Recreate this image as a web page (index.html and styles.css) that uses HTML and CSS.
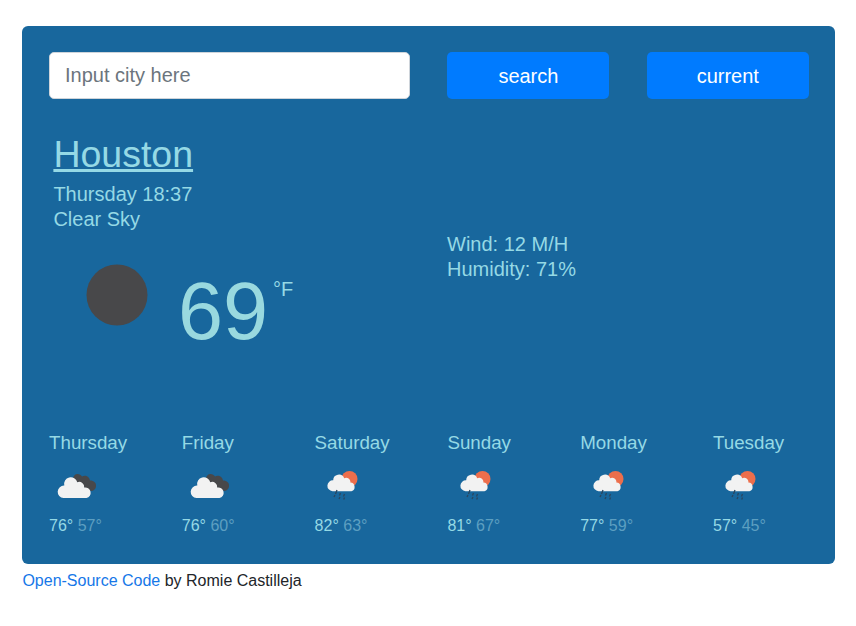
FILE: index.html
```html
<!DOCTYPE html>
<html lang="en">
<head>
<meta charset="utf-8">
<title>Weather</title>
<link rel="stylesheet" href="styles.css">
</head>
<body>
<svg width="0" height="0" class="defs" aria-hidden="true">
  <symbol id="clouds" viewBox="0 0 50 40">
    <path fill="#48484a" d="M21 14C21 11 23 9 25.500 9C27.500 9 29 10 30 11.500C33.500 9.500 37.500 12 38 15.500C42 15.500 44.500 18 44 21.500C43.700 24 42 25.500 39.500 26L34 24Z"/>
    <path fill="#f2f2f2" d="M11.500 33A6 6 0 0 1 12.300 20.600A6.700 6.700 0 0 1 25.300 17.300A5 5 0 0 1 32.200 22.600A5.200 5.200 0 0 1 34.500 33Z"/>
  </symbol>
  <symbol id="rain" viewBox="0 0 45 40">
    <circle cx="29.500" cy="14" r="8" fill="#ec6e4c"/>
    <path fill="#f2f2f2" d="M12.500 26.200A5.100 5.100 0 0 1 13.200 15.300A5.700 5.700 0 0 1 24.200 13.200A4.400 4.400 0 0 1 30.400 17.600A4.400 4.400 0 0 1 31.500 26.200Z"/>
    <path d="M17 25L15.500 29M20.500 28L19.500 30.500M15 30L14 32M24.500 29L23.500 31.500M20 32L19 34M24.500 32.500L23.700 34.500" stroke="#2b465f" stroke-width="1.300" fill="none"/>
  </symbol>
</svg>
<main class="card">
  <form class="search">
    <input class="city-input" type="text" placeholder="Input city here">
    <button class="btn" type="button">search</button>
    <button class="btn" type="button">current</button>
  </form>
  <section class="now">
    <div class="summary">
      <h1>Houston</h1>
      <p>Thursday 18:37</p>
      <p>Clear Sky</p>
      <div class="reading">
        <svg class="moon" viewBox="0 0 62 62"><circle cx="31" cy="31" r="30.500" fill="#48484a"/></svg>
        <span class="degrees">69</span>
        <span class="unit">°F</span>
      </div>
    </div>
    <div class="details">
      <p>Wind: 12 M/H</p>
      <p>Humidity: 71%</p>
    </div>
  </section>
  <section class="forecast">
    <div class="day"><h2>Thursday</h2><svg class="cloud-icon"><use href="#clouds"/></svg><p>76° <span>57°</span></p></div>
    <div class="day"><h2>Friday</h2><svg class="cloud-icon"><use href="#clouds"/></svg><p>76° <span>60°</span></p></div>
    <div class="day"><h2>Saturday</h2><svg class="rain-icon"><use href="#rain"/></svg><p>82° <span>63°</span></p></div>
    <div class="day"><h2>Sunday</h2><svg class="rain-icon"><use href="#rain"/></svg><p>81° <span>67°</span></p></div>
    <div class="day"><h2>Monday</h2><svg class="rain-icon"><use href="#rain"/></svg><p>77° <span>59°</span></p></div>
    <div class="day"><h2>Tuesday</h2><svg class="rain-icon"><use href="#rain"/></svg><p>57° <span>45°</span></p></div>
  </section>
</main>
<footer><a href="#">Open-Source Code</a> by Romie Castilleja</footer>
</body>
</html>
```

FILE: styles.css
```css
* { box-sizing: border-box; }
body {
  margin: 0;
  padding: 26px 21px 0 22px;
  background: #fff;
  color: #212529;
  font-family: "Liberation Sans", Arial, sans-serif;
  font-size: 16px;
}
h1, h2, p { margin: 0; font-weight: 400; }
.defs { display: none; }
.card {
  height: 538px;
  padding: 26px 26px 0 27px;
  border-radius: 6px;
  background: #18679d;
  color: #95d9e5;
}
.search {
  display: grid;
  grid-template-columns: 361px 162px 162px;
  column-gap: 37.4px;
  height: 47px;
}
.city-input {
  min-width: 0;
  padding: 0 15px 1px;
  border: 1px solid #ced4da;
  border-radius: 5px;
  background: #fff;
  font: 20px "Liberation Sans", Arial, sans-serif;
}
.city-input::placeholder { color: #6c757d; opacity: 1; }
.btn {
  padding: 1px 0 0;
  border: 0;
  border-radius: 5px;
  background: #007bff;
  color: #fff;
  font: 20px "Liberation Sans", Arial, sans-serif;
}
.now {
  display: grid;
  grid-template-columns: 398px 1fr;
  height: 332px;
  padding-top: 32px;
  font-size: 20px;
  line-height: 25px;
}
.summary { padding-left: 4.4px; }
h1 {
  margin-bottom: 5px;
  font-size: 37.5px;
  line-height: 46px;
  text-decoration: underline;
  text-decoration-thickness: 3px;
}
.reading { display: flex; align-items: flex-start; padding: 32px 0 0 32.6px; }
.moon { width: 62px; height: 62px; }
.degrees {
  margin: 5px 0 0 30px;
  color: #99d9df;
  font-size: 81px;
  line-height: 84px;
}
.unit { margin: 13px 0 0 4.8px; }
.details { padding-top: 101px; }
.forecast { display: grid; grid-template-columns: repeat(6, 132.8px); }
.day h2 { font-size: 18.75px; line-height: 24px; }
.day svg { display: block; height: 40px; margin-top: 10px; }
.cloud-icon { width: 50px; margin-left: 2.8px; }
.rain-icon { width: 45px; margin-left: 5.5px; }
.day p { margin-top: 10px; line-height: 22px; }
.day p span { color: #5d9fc1; }
footer { padding: 5px 0 0 0.4px; line-height: 24px; }
footer a { color: #1677e8; text-decoration: none; }
```
